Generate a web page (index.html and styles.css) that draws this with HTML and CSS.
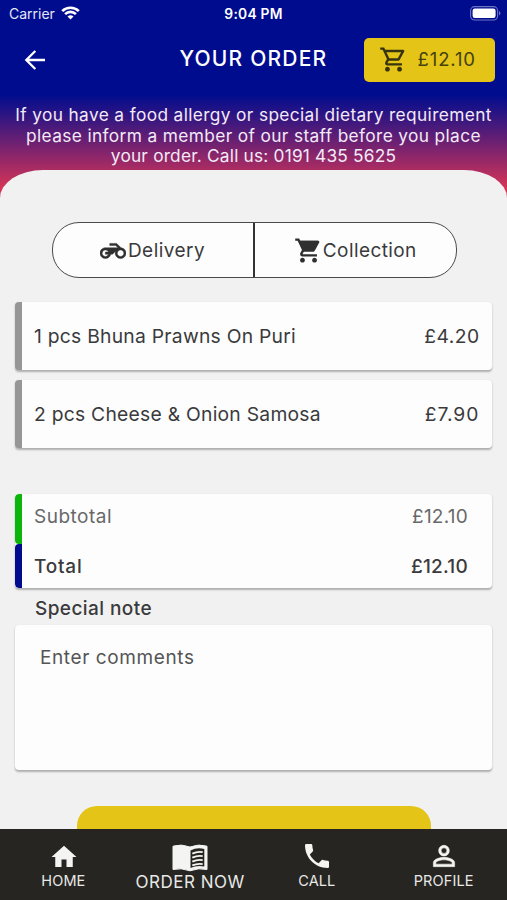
FILE: index.html
```html
<!DOCTYPE html>
<html lang="en">
<head>
<meta charset="utf-8">
<title>Your Order</title>
<link rel="stylesheet" href="styles.css">
</head>
<body>
<div class="app">
  <header class="header">
    <div class="status">
      <div class="carrier"><span>Carrier</span>
        <svg width="19" height="14" viewBox="0 0 19 14" fill="none" stroke="#fff" stroke-width="2.700"><path d="M1.200 5.100a12 12 0 0 1 16.600 0M4.100 8.100a7.800 7.800 0 0 1 10.800 0"/><path d="M9.500 13.600 6.500 10.600a4.300 4.300 0 0 1 6 0z" fill="#fff" stroke="none"/></svg>
      </div>
      <time class="clock">9:04 PM</time>
      <svg class="battery" width="31" height="15" viewBox="0 0 31 15"><rect x=".6" y=".6" width="27" height="13.4" rx="4" fill="none" stroke="#6d75c0" stroke-width="1.1"/><rect x="2.6" y="2.6" width="23" height="9.4" rx="2.2" fill="#fff"/><path d="M29 5v4.600q1.400-.8 1.400-2.300T29 5z" fill="#6d75c0"/></svg>
    </div>
    <div class="titlebar">
      <svg class="back" width="22" height="22" viewBox="0 0 22 22" fill="none" stroke="#fff" stroke-width="2.300"><path d="M21 11H3M11.300 2 2.300 11l9 9"/></svg>
      <h1 class="title">YOUR ORDER</h1>
      <button class="basket">
        <svg width="29" height="29" viewBox="0 0 24 24" fill="#37340f"><path d="M15.550 13c.75 0 1.410-.41 1.750-1.030l3.580-6.490A.996.996 0 0 0 20.010 4H5.210l-.94-2H1v2h2l3.600 7.590-1.350 2.440C4.520 15.370 5.480 17 7 17h12v-2H7l1.100-2h7.450zM6.160 6h12.150l-2.760 5H8.530L6.160 6zM7 18c-1.100 0-1.990.9-1.990 2S5.900 22 7 22s2-.9 2-2-.9-2-2-2zm10 0c-1.100 0-1.990.9-1.990 2s.89 2 1.990 2 2-.9 2-2-.9-2-2-2z"/></svg>
        <span>£12.10</span>
      </button>
    </div>
    <p class="notice"><span class="wide">If you have a food allergy or special dietary requirement</span><br><span class="wide">please inform a member of our staff before you place</span><br><span>your order. Call us: 0191 435 5625</span></p>
  </header>
  <main class="panel">
    <div class="modes">
      <button class="mode">
        <svg class="bike" width="26" height="26" viewBox="0 0 24 24" fill="#2f2f2f" stroke="#2f2f2f" stroke-width=".4"><path d="M19.440 9.030 15.410 5H9v2h5.590l2 2H5c-2.800 0-5 2.200-5 5s2.200 5 5 5c2.460 0 4.450-1.690 4.900-4h1.650l2.770-2.770c-.21.54-.32 1.140-.32 1.770 0 2.800 2.200 5 5 5s5-2.200 5-5c0-2.650-1.970-4.770-4.560-4.970zM7.820 15C7.400 16.150 6.280 17 5 17c-1.630 0-3-1.370-3-3s1.370-3 3-3c1.280 0 2.400.85 2.820 2H5v2h2.820zM19 17c-1.660 0-3-1.340-3-3s1.340-3 3-3 3 1.340 3 3-1.340 3-3 3z"/></svg>
        <span>Delivery</span>
      </button>
      <button class="mode">
        <svg width="29" height="29" viewBox="0 0 24 24" fill="#2f2f2f"><path d="M5 4h15l-4 8H8z"/><path d="M7 18c-1.100 0-1.990.9-1.990 2S5.900 22 7 22s2-.9 2-2-.9-2-2-2zM1 2v2h2l3.600 7.590-1.350 2.450C4.520 15.370 5.480 17 7 17h12v-2H7.420a.25.25 0 0 1-.25-.25L8.100 13h7.450c.75 0 1.410-.41 1.750-1.030l3.580-6.490A1 1 0 0 0 20 4H5.210l-.94-2H1zm16 16c-1.100 0-1.990.9-1.990 2s.89 2 1.990 2 2-.9 2-2-.9-2-2-2z"/></svg>
        <span>Collection</span>
      </button>
    </div>
    <section class="items">
      <div class="card item"><span>1 pcs Bhuna Prawns On Puri</span><span class="price">£4.20</span></div>
      <div class="card item"><span>2 pcs Cheese &amp; Onion Samosa</span><span class="price price-wide">£7.90</span></div>
    </section>
    <section class="card totals">
      <div class="row sub"><span>Subtotal</span><span class="sum">£12.10</span></div>
      <div class="row total"><span>Total</span><span class="sum">£12.10</span></div>
    </section>
    <h2 class="note-title">Special note</h2>
    <div class="card comments">Enter comments</div>
    <div class="confirm"></div>
  </main>
  <nav class="nav">
    <a class="tab"><svg class="home" width="30" height="30" viewBox="0 0 24 24" fill="#f4f4f2"><path d="M10 20v-6h4v6h5v-8h3L12 3 2 12h3v8z"/></svg><span>HOME</span></a>
    <a class="tab active"><svg width="36" height="28" viewBox="0 0 36 28"><path d="M1 2.200Q9-.4 18 3 27-.4 35 2.200V25.500Q27 23.500 18 26.800 9 23.500 1 25.500z" fill="#f4f4f2" stroke="#f4f4f2" stroke-linejoin="round"/><path d="M18.500 6.500Q25 3 32.300 5V22.500Q25 21 18.500 24z" fill="#262521"/><path d="M20.300 9.600q5.200-2.500 10.400-1.500M20.300 13.600q5.200-2.500 10.400-1.500M20.300 17.600q5.200-2.500 10.400-1.500M20.300 21.400q5.200-2.300 10.400-1.300" stroke="#f4f4f2" stroke-width="1.800" fill="none"/></svg><span>ORDER NOW</span></a>
    <a class="tab"><svg width="32" height="32" viewBox="0 0 24 24" fill="#f4f4f2"><path d="M6.620 10.790c1.440 2.830 3.760 5.140 6.590 6.590l2.200-2.200c.27-.27.67-.36 1.020-.24 1.120.37 2.330.57 3.570.57.55 0 1 .45 1 1V20c0 .55-.45 1-1 1-9.390 0-17-7.610-17-17 0-.55.45-1 1-1h3.500c.55 0 1 .45 1 1 0 1.250.2 2.450.57 3.570.11.35.03.74-.25 1.020l-2.200 2.200z"/></svg><span>CALL</span></a>
    <a class="tab"><svg width="32" height="32" viewBox="0 0 24 24" fill="#f4f4f2" stroke="#f4f4f2" stroke-width=".4"><path d="M12 5.900a2.100 2.100 0 1 1 0 4.200 2.100 2.100 0 0 1 0-4.200m0 9c2.970 0 6.100 1.460 6.100 2.100v1.100H5.900V17c0-.64 3.130-2.100 6.100-2.100M12 4C9.790 4 8 5.790 8 8s1.790 4 4 4 4-1.790 4-4-1.790-4-4-4zm0 9c-2.670 0-8 1.340-8 4v3h16v-3c0-2.660-5.330-4-8-4z"/></svg><span>PROFILE</span></a>
  </nav>
</div>
</body>
</html>
```
FILE: styles.css
```css
* { box-sizing: border-box; }
body { margin: 0; font-family: Inter, "Open Sans", sans-serif; color: #3a3a3c; }
button { font: inherit; color: inherit; border: 0; padding: 0; }
h1, h2, p { margin: 0; }
span { white-space: nowrap; }
.app { width: 507px; height: 900px; overflow: hidden; display: flex; flex-direction: column; background: linear-gradient(#000c8e 0 95px, #d53457 188px, #d53457 200px, #f1f1f1 200px); }
.header { height: 170px; flex: none; color: #fff; }
.status { height: 28px; display: grid; grid-template-columns: 1fr auto 1fr; align-items: center; padding: 0 6px 0 9px; font-size: 14px; }
.carrier { display: flex; align-items: center; gap: 6px; color: #e4e6f5; margin-top: -2px; }
.clock { font-weight: 600; font-size: 13.800px; letter-spacing: .25px; margin-left: -3px; }
.battery { justify-self: end; margin-top: -2px; }
.titlebar { height: 63px; display: flex; align-items: center; padding: 0 12.500px 0 24px; }
.back { flex: none; }
.title { flex: 1; padding: 0 0 2px 133.500px; font-size: 21px; font-weight: 500; letter-spacing: 1.200px; white-space: nowrap; }
.basket { width: 131px; height: 44px; flex: none; background: #e3c417; border-radius: 5px; color: #45410f; display: flex; align-items: center; padding-left: 15px; gap: 10px; font-size: 18.500px; letter-spacing: .9px; }
.basket span { margin-top: -2px; }
.notice { padding-top: 14px; font-size: 17.300px; line-height: 20.700px; text-align: center; color: #f3eaf8; letter-spacing: .2px; }
.wide { letter-spacing: .37px; }
.panel { flex: 1; min-height: 0; overflow: hidden; background: #f1f1f1; border-radius: 43px 43px 0 0 / 28px 28px 0 0; display: flex; flex-direction: column; padding: 52px 15px 0; }
.modes { flex: none; width: 405px; height: 56px; margin-left: 36.500px; display: flex; border: 1.300px solid #4a4a4a; border-radius: 27px; background: #fdfdfd; overflow: hidden; }
.mode { flex: 1; display: flex; align-items: center; justify-content: center; background: none; font-size: 19px; gap: 1.500px; letter-spacing: .45px; }
.mode + .mode { border-left: 2px solid #333; gap: 0; letter-spacing: .4px; }
.bike { margin-top: 1px; }
.card { flex: none; background: #fdfdfd; border-radius: 4px; box-shadow: 0 1.500px 2px rgba(0,0,0,.28); overflow: hidden; }
.items { display: flex; flex-direction: column; gap: 10px; margin-top: 24px; flex: none; }
.item { height: 68px; display: flex; align-items: center; justify-content: space-between; border-left: 7px solid #969696; padding: 0 12.500px 1px 12px; font-size: 19.300px; letter-spacing: .25px; }
.price { letter-spacing: .45px; }
.price-wide { letter-spacing: 1px; }
.totals { margin-top: 46px; height: 94px; }
.row { display: flex; justify-content: space-between; border-left: 7px solid; border-radius: 4px 0 0 4px; padding: 0 24px 0 12px; font-size: 19px; line-height: 46px; letter-spacing: .5px; }
.row span { color: #3a3a3c; }
.row .sum { letter-spacing: .25px; }
.sub { height: 50px; border-color: #0bb50b; }
.sub span { color: #68686a; }
.total { height: 44px; border-color: #000c8e; font-weight: 500; letter-spacing: .8px; }
.note-title { flex: none; font-size: 19px; font-weight: 500; line-height: 42px; height: 37px; padding-left: 20px; letter-spacing: .42px; }
.comments { height: 145px; padding: 20px 25px; font-size: 19px; line-height: 26px; letter-spacing: .6px; color: #555; }
.confirm { flex: none; width: 354px; height: 50px; margin: 36px 0 0 62px; background: #e3c417; border-radius: 20px; }
.nav { height: 71px; flex: none; background: #262521; display: grid; grid-template-columns: repeat(4, 1fr); color: #e8e8e6; }
.tab { display: flex; flex-direction: column; align-items: center; justify-content: flex-end; padding-bottom: 10px; font-size: 14.500px; line-height: 18px; letter-spacing: .1px; }
.tab svg { flex: none; }
.home { margin-left: 2px; }
.active { font-size: 17px; letter-spacing: .5px; padding-bottom: 9px; }
.active svg { margin-bottom: 1px; }
```
